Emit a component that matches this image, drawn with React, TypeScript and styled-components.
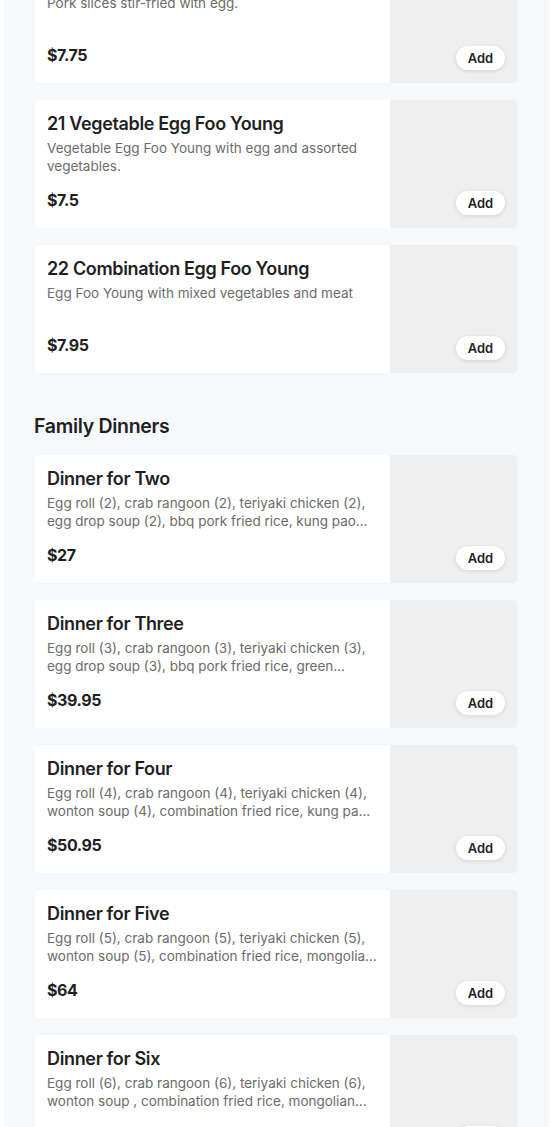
import React from 'react'
import styled, { createGlobalStyle } from 'styled-components'

const GlobalStyle = createGlobalStyle`
  html, body {
    margin: 0;
    padding: 0;
    background: #ffffff;
  }
  body {
    font-family: Inter, 'Noto Sans', sans-serif;
    color: #1f1f1f;
  }
`

const Page = styled.div`
  margin: 0 1px 0 4px;
  background: #f7f8fa;
  padding: 0 32px 40px 31px;
  overflow: hidden;
  min-height: 1127px;
  box-sizing: border-box;
`

const Section = styled.section`
  display: flex;
  flex-direction: column;
  gap: 17px;
`

const SectionTitle = styled.h2`
  margin: 41px 0 0 -1px;
  font-size: 19.5px;
  line-height: 24px;
  font-weight: 600;
  color: #1f1f1f;
  letter-spacing: -0.3px;
`

const Card = styled.div<{ $first?: boolean }>`
  display: flex;
  height: 128px;
  border-radius: 4px;
  overflow: hidden;
  background: #ffffff;
  box-shadow: 0 0 2px rgba(0, 0, 0, 0.03);
  margin-top: ${(p) => (p.$first ? '-45px' : '0')};
`

const Info = styled.div`
  flex: 1;
  display: flex;
  flex-direction: column;
  padding: 12px 12px 18px;
  min-width: 0;
`

const Name = styled.div`
  font-size: 18px;
  line-height: 24px;
  font-weight: 600;
  color: #1f1f1f;
  letter-spacing: -0.35px;
`

const Desc = styled.div`
  margin-top: 3px;
  font-size: 13.5px;
  line-height: 18px;
  color: #6b6b6b;
  min-height: 36px;
  display: -webkit-box;
  -webkit-line-clamp: 2;
  -webkit-box-orient: vertical;
  overflow: hidden;
`

const Price = styled.div`
  margin-top: auto;
  font-size: 16px;
  line-height: 20px;
  font-weight: 700;
  color: #1f1f1f;
  letter-spacing: -0.4px;
`

const Photo = styled.div`
  width: 127px;
  flex-shrink: 0;
  background: #efefef;
  display: flex;
  align-items: flex-end;
  justify-content: flex-end;
  padding: 0 12px 13px 0;
  box-sizing: border-box;
`

const AddButton = styled.button`
  width: 49px;
  height: 24px;
  border: none;
  border-radius: 12px;
  background: #ffffff;
  box-shadow: 0 1px 4px rgba(0, 0, 0, 0.12);
  font-family: Inter, 'Noto Sans', sans-serif;
  font-size: 13px;
  font-weight: 600;
  color: #1f1f1f;
  padding: 0;
  cursor: pointer;
`

type Item = { name: string; desc: string; price: string }

const eggFooYoung: Item[] = [
  { name: '20 Pork Egg Foo Young', desc: 'Pork slices stir-fried with egg.', price: '$7.75' },
  {
    name: '21 Vegetable Egg Foo Young',
    desc: 'Vegetable Egg Foo Young with egg and assorted vegetables.',
    price: '$7.5'
  },
  { name: '22 Combination Egg Foo Young', desc: 'Egg Foo Young with mixed vegetables and meat', price: '$7.95' }
]

const familyDinners: Item[] = [
  {
    name: 'Dinner for Two',
    desc: 'Egg roll (2), crab rangoon (2), teriyaki chicken (2), egg drop soup (2), bbq pork fried rice, kung pao chicken',
    price: '$27'
  },
  {
    name: 'Dinner for Three',
    desc: 'Egg roll (3), crab rangoon (3), teriyaki chicken (3), egg drop soup (3), bbq pork fried rice, green pepper steak',
    price: '$39.95'
  },
  {
    name: 'Dinner for Four',
    desc: 'Egg roll (4), crab rangoon (4), teriyaki chicken (4), wonton soup (4), combination fried rice, kung pao chicken',
    price: '$50.95'
  },
  {
    name: 'Dinner for Five',
    desc: 'Egg roll (5), crab rangoon (5), teriyaki chicken (5), wonton soup (5), combination fried rice, mongolian beef',
    price: '$64'
  },
  {
    name: 'Dinner for Six',
    desc: 'Egg roll (6), crab rangoon (6), teriyaki chicken (6), wonton soup , combination fried rice, mongolian beef',
    price: '$76'
  }
]

function MenuCard({ item, first }: { item: Item; first?: boolean }) {
  return (
    <Card $first={first}>
      <Info>
        <Name>{item.name}</Name>
        <Desc>{item.desc}</Desc>
        <Price>{item.price}</Price>
      </Info>
      <Photo>
        <AddButton>Add</AddButton>
      </Photo>
    </Card>
  )
}

export default function App() {
  return (
    <>
      <GlobalStyle />
      <Page>
        <Section>
          {eggFooYoung.map((item, i) => (
            <MenuCard key={item.name} item={item} first={i === 0} />
          ))}
        </Section>
        <Section>
          <SectionTitle>Family Dinners</SectionTitle>
          {familyDinners.map((item) => (
            <MenuCard key={item.name} item={item} />
          ))}
        </Section>
      </Page>
    </>
  )
}
